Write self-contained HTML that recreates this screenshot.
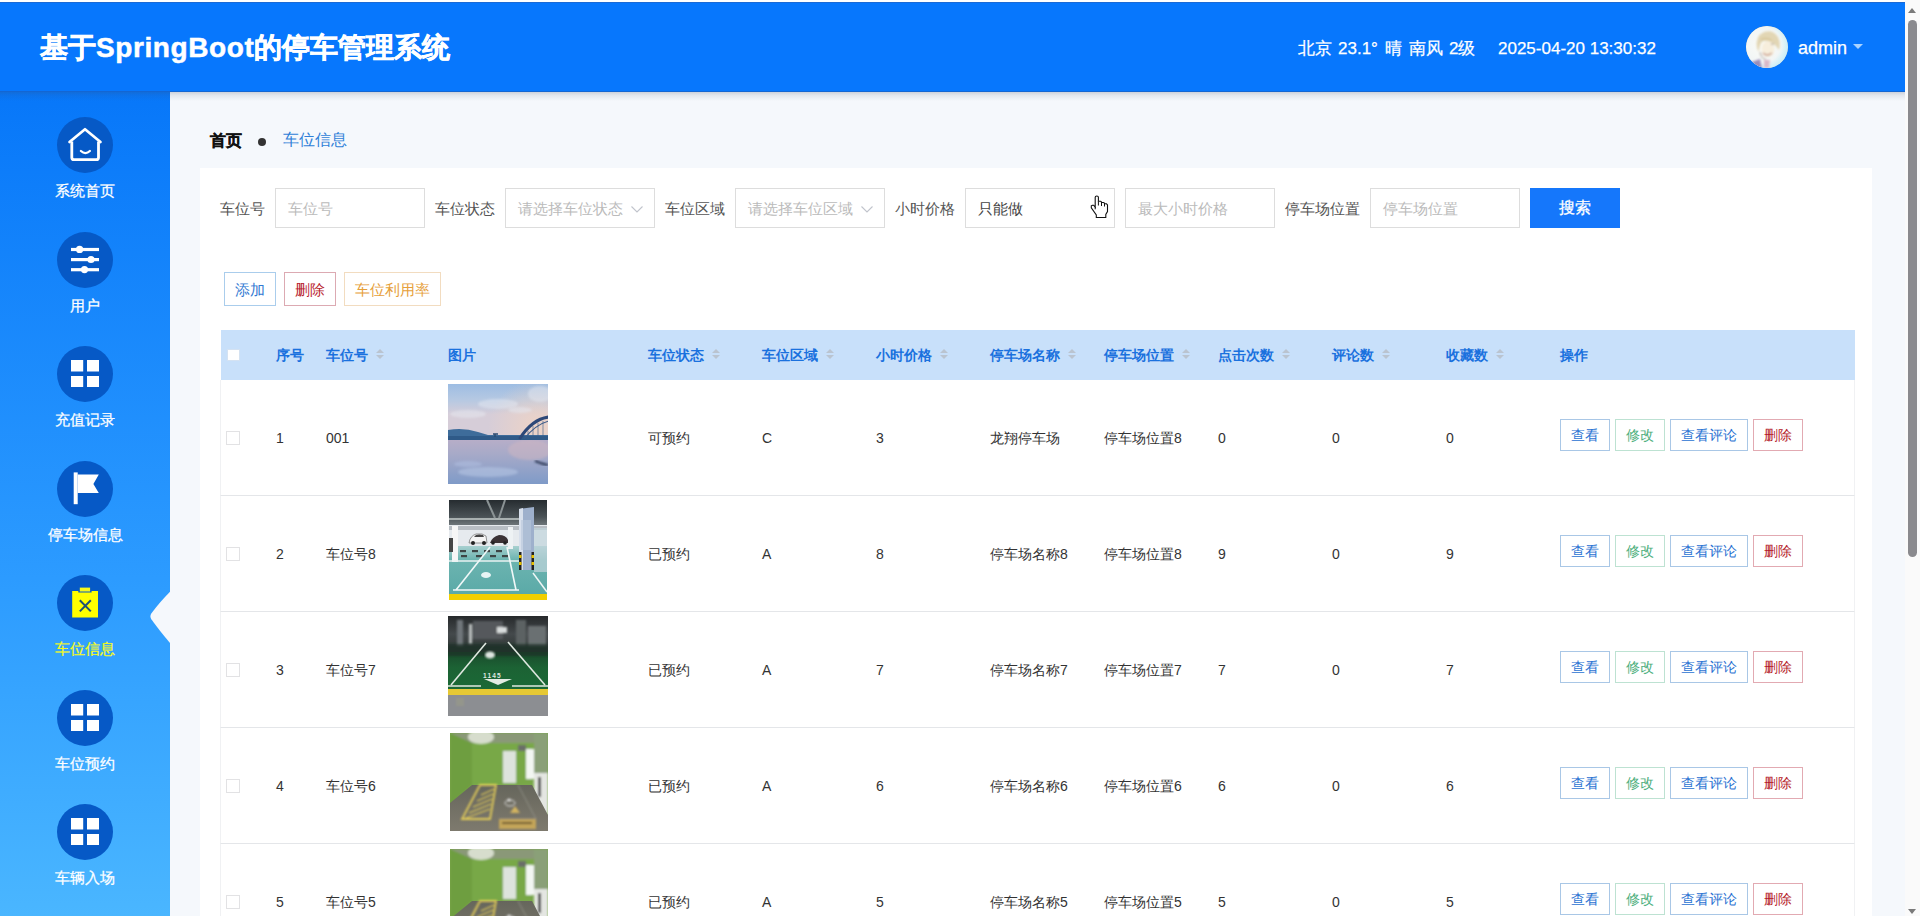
<!DOCTYPE html>
<html><head><meta charset="utf-8">
<style>
*{margin:0;padding:0;box-sizing:border-box}
html,body{width:1920px;height:916px;overflow:hidden;background:#fff;font-family:"Liberation Sans",sans-serif;}
.abs{position:absolute}
#hdr{position:absolute;left:0;top:2px;width:1905px;height:90px;background:#0777fd;border-top:1px solid #1a6ad6;border-bottom:1px solid #1466d2}
#hshadow{position:absolute;left:0;top:92px;width:1905px;height:9px;background:linear-gradient(180deg,rgba(60,70,100,0.22) 0%,rgba(60,70,100,0.10) 35%,rgba(60,70,100,0) 100%)}
#title{position:absolute;left:40px;top:26.5px;font-size:28px;font-weight:700;-webkit-text-stroke:0.5px #fff;color:#fff;white-space:nowrap;line-height:36px;}
.htxt{position:absolute;color:#fff;font-size:17px;line-height:24px;white-space:nowrap;top:33.5px;-webkit-text-stroke:0.25px #fff}
#admin{font-size:18px;top:33px}
#avatar{left:1746px;top:23px;width:42px;height:42px;border-radius:50%;background:radial-gradient(circle at 45% 40%,#f1e6c8 0%,#e6d6b8 40%,#c9c2c8 70%,#eef0f5 100%)}
#caret{left:1853px;top:41px;width:0;height:0;border-left:5px solid transparent;border-right:5px solid transparent;border-top:5px solid #a9d3ff}
#side{position:absolute;left:0;top:92px;width:170px;height:824px;background:linear-gradient(180deg,#0777f9 0%,#2c9bff 59%,#4ab6ff 100%);}
.circ{position:absolute;left:57px;width:56px;height:56px;border-radius:50%;background:#0659c6;}
.circ svg{position:absolute;left:0;top:0}
.lbl{position:absolute;left:0;width:170px;text-align:center;color:#fff;font-size:15px;line-height:20px;}
#main{position:absolute;left:170px;top:92px;width:1735px;height:824px;background:#f5f8fc;}
#card{position:absolute;left:200px;top:168px;width:1672px;height:748px;background:#fff;}
.bc{line-height:22px;white-space:nowrap}
.flbl{position:absolute;top:199px;font-size:15px;line-height:20px;color:#555;white-space:nowrap}
.inp{position:absolute;top:188px;width:150px;height:40px;border:1px solid #dddddd;background:#fff;font-size:15px;line-height:40px;padding-left:12px;color:#bbb;white-space:nowrap;overflow:hidden}
.inp.val{color:#444}
.inp .arr{position:absolute;right:11px;top:17px}
#sbtn{left:1530px;top:188px;width:90px;height:40px;background:#1577fb;color:#fff;font-size:16px;line-height:40px;text-align:center;-webkit-text-stroke:0.3px #fff}
.btn{position:absolute;top:272px;height:34px;border:1px solid;font-size:15px;line-height:33px;text-align:center;white-space:nowrap;background:#fff}
#thead{left:221px;top:330px;width:1634px;height:50px;background:#c8e0fa}
.th{position:absolute;top:345px;font-size:14px;line-height:20px;font-weight:bold;color:#1a71de;white-space:nowrap}
.sort{display:inline-block;vertical-align:middle;margin-left:8px;width:8px;height:10px;position:relative;top:-2px}
.sort:before{content:"";position:absolute;left:0;top:0;border-left:4px solid transparent;border-right:4px solid transparent;border-bottom:4px solid #bac4d0}
.sort:after{content:"";position:absolute;left:0;top:6px;border-left:4px solid transparent;border-right:4px solid transparent;border-top:4px solid #bac4d0}
.row{position:absolute;left:220px;width:1635px;height:116px;border-bottom:1px solid #e4e6e9;border-left:1px solid #f0f1f3;border-right:1px solid #f0f1f3;background:#fff}
.td{position:absolute;font-size:14px;line-height:20px;color:#333;white-space:nowrap}
.cb{position:absolute;width:14px;height:14px;border:1px solid #e2e2e4;border-radius:0;background:#fff}
.ab{position:absolute;height:32px;border:1px solid;font-size:14px;line-height:30px;text-align:center;background:#fff;white-space:nowrap}
.pic{position:absolute;width:100px;height:100px;overflow:hidden}
.p1{background:linear-gradient(180deg,#8fb0d8 0%,#b9c9e0 30%,#d8c8d0 52%,#6f8fb8 56%,#a8a8c8 70%,#7c9cc8 100%)}
.p2{background:linear-gradient(180deg,#3a4048 0%,#8a9aa0 30%,#5ea6a8 45%,#68b4b8 90%,#e8c800 92%,#f0d000 100%)}
.p3{background:linear-gradient(180deg,#303438 0%,#5a6468 30%,#2a7a48 45%,#207040 75%,#e0c020 77%,#8a8e90 80%,#7a7e80 100%)}
.p4{background:linear-gradient(180deg,#e8f0d8 0%,#6a8a40 20%,#5a7a38 55%,#6a6a60 70%,#5a5a50 100%)}
#scroll{position:absolute;left:1905px;top:0;width:15px;height:916px;background:#fafafa;}
#sarrow{position:absolute;left:3px;top:8px;width:0;height:0;border-left:4.5px solid transparent;border-right:4.5px solid transparent;border-bottom:5px solid #7a7a7a}
#sdown{position:absolute;left:3px;top:909px;width:0;height:0;border-left:4.5px solid transparent;border-right:4.5px solid transparent;border-top:5px solid #7a7a7a}
#thumb{position:absolute;left:3px;top:20px;width:9px;height:537px;border-radius:5px;background:#8a8a8e}

</style></head><body>
<div id="main"></div><div id="card"></div><div id="side"></div><div id="hshadow"></div>
<div id="hdr">
  <div id="title">基于<span style="letter-spacing:0.6px">SpringBoot</span>的停车管理系统</div>
  <div class="htxt" style="left:1298px">北京</div><div class="htxt" style="left:1338px">23.1°</div><div class="htxt" style="left:1385px">晴</div><div class="htxt" style="left:1409px">南风</div><div class="htxt" style="left:1449px">2级</div>
  <div class="htxt" id="date" style="left:1498px">2025-04-20 13:30:32</div>
  <svg class="abs" id="avatar" width="42" height="42" viewBox="0 0 42 42"><defs><clipPath id="avc"><circle cx="21" cy="21" r="21"/></clipPath><filter id="avb"><feGaussianBlur stdDeviation="0.9"/></filter><radialGradient id="avg" cx="0.4" cy="0.45" r="0.6"><stop offset="0" stop-color="#fbfbf6"/><stop offset="0.7" stop-color="#f2f6f6"/><stop offset="1" stop-color="#c8eef8"/></radialGradient></defs><g clip-path="url(#avc)"><rect width="42" height="42" fill="url(#avg)"/><g filter="url(#avb)"><path d="M11 22 Q9 10 18 6 Q27 3 32 11 Q35 17 33 24 L30 20 Q25 14 17 15 Q13 18 13 26 Z" fill="#e2d6b4"/><ellipse cx="22" cy="23" rx="6.5" ry="8" fill="#f7eedc"/><path d="M15 14 Q20 11 26 15" stroke="#d8c89c" stroke-width="2" fill="none"/><path d="M17 27 Q21 31 26 27" stroke="#c89a8a" stroke-width="1.3" fill="none"/><path d="M25 18 L28 18" stroke="#8a7a6a" stroke-width="0.8"/><path d="M6 36 L14 33 L16 42 L4 42 Z" fill="#9a8cb8"/><path d="M18 34 L24 34 L23 42 L18 42 Z" fill="#d8b8c8"/><path d="M14 26 Q16 34 20 33" stroke="#9a8a80" stroke-width="0.8" fill="none"/></g></g></svg>
  <div class="htxt" id="admin" style="left:1798px">admin</div>
  <div class="abs" id="caret"></div>
</div>
<div class="circ" style="top:117.0px"><svg width="56" height="56" viewBox="0 0 56 56"><path d="M12.5 25 L28 12.2 L43.5 25" fill="none" stroke="#fff" stroke-width="2.7" stroke-linejoin="round" stroke-linecap="round"/><path d="M14.8 24.5 V40.4 Q14.8 42.6 17 42.6 H39.3 Q41.5 42.6 41.5 40.4 V24.5" fill="none" stroke="#fff" stroke-width="2.8" stroke-linejoin="round"/><path d="M23.9 34 Q28.4 38.2 32.9 34" fill="none" stroke="#fff" stroke-width="2.3" stroke-linecap="round"/></svg></div>
<div class="lbl" style="top:181.0px;color:#fff;-webkit-text-stroke:0.25px #fff">系统首页</div>
<div class="circ" style="top:231.5px"><svg width="56" height="56" viewBox="0 0 56 56"><g stroke="#fff" stroke-width="3.2" stroke-linecap="butt"><line x1="14" y1="17.5" x2="42" y2="17.5"/><line x1="14" y1="27.6" x2="42" y2="27.6"/><line x1="14" y1="37.7" x2="42" y2="37.7"/></g><g fill="#fff"><circle cx="22.6" cy="17.4" r="3.6"/><circle cx="34" cy="27.5" r="3.6"/><circle cx="27.5" cy="37.6" r="3.6"/></g></svg></div>
<div class="lbl" style="top:295.5px;color:#fff;-webkit-text-stroke:0.25px #fff">用户</div>
<div class="circ" style="top:346.0px"><svg width="56" height="56" viewBox="0 0 56 56"><g fill="#fff"><rect x="14" y="14" width="12.2" height="11.5"/><rect x="30" y="14" width="12" height="11.5"/><rect x="14" y="30" width="12.2" height="11"/><rect x="30" y="30" width="12" height="11"/></g></svg></div>
<div class="lbl" style="top:410.0px;color:#fff;-webkit-text-stroke:0.25px #fff">充值记录</div>
<div class="circ" style="top:460.5px"><svg width="56" height="56" viewBox="0 0 56 56"><path d="M16.7 11.4 H20.7 V43.2 H16.7 Z" fill="#fff"/><path d="M20.7 13.5 H41.8 L36.4 22.9 L41.8 32.1 H20.7 Z" fill="#fff"/></svg></div>
<div class="lbl" style="top:524.5px;color:#fff;-webkit-text-stroke:0.25px #fff">停车场信息</div>
<div class="circ" style="top:575.0px"><svg width="56" height="56" viewBox="0 0 56 56"><rect x="22.8" y="12.6" width="10.3" height="3.9" fill="#f6fa1a"/><path d="M15.2 15.9 H21.3 V17.5 H34.6 V15.9 H41 V42.5 H15.2 Z" fill="#ffff00"/><path d="M22.8 25.2 L33.8 36.4 M33.8 25.2 L22.8 36.4" stroke="#1e4f73" stroke-width="2"/></svg></div>
<div class="lbl" style="top:639.0px;color:#f4fa1c;-webkit-text-stroke:0.25px #f4fa1c">车位信息</div>
<div class="circ" style="top:689.5px"><svg width="56" height="56" viewBox="0 0 56 56"><g fill="#fff"><rect x="14" y="14" width="12.2" height="11.5"/><rect x="30" y="14" width="12" height="11.5"/><rect x="14" y="30" width="12.2" height="11"/><rect x="30" y="30" width="12" height="11"/></g></svg></div>
<div class="lbl" style="top:753.5px;color:#fff;-webkit-text-stroke:0.25px #fff">车位预约</div>
<div class="circ" style="top:804.0px"><svg width="56" height="56" viewBox="0 0 56 56"><g fill="#fff"><rect x="14" y="14" width="12.2" height="11.5"/><rect x="30" y="14" width="12" height="11.5"/><rect x="14" y="30" width="12.2" height="11"/><rect x="30" y="30" width="12" height="11"/></g></svg></div>
<div class="lbl" style="top:868.0px;color:#fff;-webkit-text-stroke:0.25px #fff">车辆入场</div>
<svg class="abs" style="left:146px;top:590px" width="26" height="56" viewBox="0 0 26 56"><path d="M24 1.8 Q13 13 5.5 23.3 Q3.3 26.4 5.5 29.5 Q13 40 24 53 Z" fill="#f5f8fc"/></svg>
<div class="abs bc" style="left:210px;top:129.5px;font-weight:bold;color:#111;font-size:16px;-webkit-text-stroke:0.3px #111">首页</div>
<div class="abs" style="left:258px;top:138px;width:8px;height:8px;border-radius:50%;background:#333"></div>
<div class="abs bc" style="left:283px;top:129px;color:#2f7fd8;font-size:16px">车位信息</div>
<div class="flbl" style="left:220px">车位号</div>
<div class="inp" style="left:275px">车位号</div>
<div class="flbl" style="left:435px">车位状态</div>
<div class="inp" style="left:505px">请选择车位状态<svg class="arr" width="12" height="7" viewBox="0 0 12 7"><path d="M0.5 0.5 L6 6 L11.5 0.5" fill="none" stroke="#c0c4cc" stroke-width="1.1"/></svg></div>
<div class="flbl" style="left:665px">车位区域</div>
<div class="inp" style="left:735px">请选择车位区域<svg class="arr" width="12" height="7" viewBox="0 0 12 7"><path d="M0.5 0.5 L6 6 L11.5 0.5" fill="none" stroke="#c0c4cc" stroke-width="1.1"/></svg></div>
<div class="flbl" style="left:895px">小时价格</div>
<div class="inp val" style="left:965px">只能做</div>
<div class="inp" style="left:1125px">最大小时价格</div>
<div class="flbl" style="left:1285px">停车场位置</div>
<div class="inp" style="left:1370px">停车场位置</div>
<div class="abs" id="sbtn">搜索</div>
<svg class="abs" style="left:1080px;top:190px" width="36" height="34" viewBox="0 0 36 34"><path d="M15.2 7.2 Q15.2 6 16.8 6 Q18.4 6 18.4 7.2 V11.3 H20.5 Q21.5 11.3 21.5 12.3 V12.5 H23.5 Q24.5 12.5 24.5 13.5 V13.8 H26.5 L27.5 15 V21.6 L25.8 24.5 V27.5 H16.3 V25 L11.3 17.8 V15.8 L12.5 15.2 H13.5 L15.2 17 Z" fill="#fff" stroke="#111" stroke-width="1.1" stroke-linejoin="miter"/><path d="M15.2 17 V19.3 M18.4 11.3 V15.5 M21.5 12.5 V16 M24.5 13.8 V16.5" stroke="#111" stroke-width="1"/></svg>
<div class="btn" style="left:224px;width:52px;color:#3279d2;border-color:#aacdec">添加</div>
<div class="btn" style="left:284px;width:52px;color:#b8222c;border-color:#dcaab2">删除</div>
<div class="btn" style="left:344px;width:97px;color:#e6a03a;border-color:#f2dcc0">车位利用率</div>
<div class="abs" id="thead"></div>
<div class="cb" style="left:226.5px;top:348.5px;width:13px;height:12.5px;border-color:#d4e2f2"></div>
<div class="th" style="left:276px">序号</div>
<div class="th" style="left:326px">车位号<span class="sort"></span></div>
<div class="th" style="left:448px">图片</div>
<div class="th" style="left:648px">车位状态<span class="sort"></span></div>
<div class="th" style="left:762px">车位区域<span class="sort"></span></div>
<div class="th" style="left:876px">小时价格<span class="sort"></span></div>
<div class="th" style="left:990px">停车场名称<span class="sort"></span></div>
<div class="th" style="left:1104px">停车场位置<span class="sort"></span></div>
<div class="th" style="left:1218px">点击次数<span class="sort"></span></div>
<div class="th" style="left:1332px">评论数<span class="sort"></span></div>
<div class="th" style="left:1446px">收藏数<span class="sort"></span></div>
<div class="th" style="left:1560px">操作</div>
<div class="row" style="top:380px"></div>
<div class="cb" style="left:226px;top:431px"></div>
<div class="td" style="left:276px;top:427.5px">1</div>
<div class="td" style="left:326px;top:427.5px">001</div>
<div class="td" style="left:648px;top:427.5px">可预约</div>
<div class="td" style="left:762px;top:427.5px">C</div>
<div class="td" style="left:876px;top:427.5px">3</div>
<div class="td" style="left:990px;top:427.5px">龙翔停车场</div>
<div class="td" style="left:1104px;top:427.5px">停车场位置8</div>
<div class="td" style="left:1218px;top:427.5px">0</div>
<div class="td" style="left:1332px;top:427.5px">0</div>
<div class="td" style="left:1446px;top:427.5px">0</div>
<div class="pic" style="left:448px;top:384px"><svg width="100" height="100" viewBox="0 0 100 100">
<defs>
<linearGradient id="s1" x1="0" y1="0" x2="0" y2="1"><stop offset="0" stop-color="#9dbde3"/><stop offset="0.3" stop-color="#b7c9e2"/><stop offset="0.55" stop-color="#d6cdd8"/></linearGradient>
<linearGradient id="w1" x1="0" y1="0" x2="0" y2="1"><stop offset="0" stop-color="#b9aec8"/><stop offset="0.35" stop-color="#a7aac8"/><stop offset="1" stop-color="#7f9bc8"/></linearGradient>
<radialGradient id="g1" cx="0.9" cy="0.45" r="0.5"><stop offset="0" stop-color="#f0d4c4" stop-opacity="0.9"/><stop offset="1" stop-color="#f0d4c4" stop-opacity="0"/></radialGradient>
<filter id="b1"><feGaussianBlur stdDeviation="1.2"/></filter>
</defs>
<rect width="100" height="55" fill="url(#s1)"/>
<rect width="100" height="100" fill="url(#g1)"/>
<g filter="url(#b1)" fill="#e8ecf4" opacity="0.45"><ellipse cx="50" cy="20" rx="20" ry="5"/><ellipse cx="20" cy="30" rx="18" ry="4"/><ellipse cx="92" cy="10" rx="12" ry="8"/><ellipse cx="72" cy="26" rx="12" ry="3"/></g>
<rect y="54" width="100" height="46" fill="url(#w1)"/>
<g filter="url(#b1)"><ellipse cx="82" cy="66" rx="22" ry="10" fill="#d4b8c0" opacity="0.45"/><ellipse cx="40" cy="88" rx="30" ry="5" fill="#c0d0ea" opacity="0.45"/><ellipse cx="20" cy="80" rx="14" ry="3" fill="#b8c8e8" opacity="0.4"/></g>
<path d="M0 46 Q15 43 30 48 L40 51 H100 V56 H0 Z" fill="#3e6c9a"/>
<path d="M0 52 H100 V56 H0 Z" fill="#2f5a88"/>
<path d="M47 53 V50 M45 50 H50" stroke="#2a4a70" stroke-width="1.4"/>
<path d="M71.5 55 Q84 35 101 33" fill="none" stroke="#2d4878" stroke-width="3"/>
<path d="M76 55 Q88 40 101 37" fill="none" stroke="#3a5a88" stroke-width="1.2"/>
<g stroke="#3a5a88" stroke-width="0.6"><path d="M80 47 V55 M85 42 V55 M90 39 V55 M95 37 V55"/></g>
<path d="M87 77 Q94 80 100 81" fill="none" stroke="#2d3a58" stroke-width="2" filter="url(#b1)"/>
</svg></div>
<div class="ab" style="left:1560px;top:419px;width:50px;color:#2a72d2;border-color:#a9c7e6">查看</div>
<div class="ab" style="left:1615px;top:419px;width:50px;color:#4cae7c;border-color:#bde2d2">修改</div>
<div class="ab" style="left:1670px;top:419px;width:78px;color:#2a72d2;border-color:#a9c7e6">查看评论</div>
<div class="ab" style="left:1753px;top:419px;width:50px;color:#b42028;border-color:#e2aab2">删除</div>
<div class="row" style="top:496px"></div>
<div class="cb" style="left:226px;top:547px"></div>
<div class="td" style="left:276px;top:543.5px">2</div>
<div class="td" style="left:326px;top:543.5px">车位号8</div>
<div class="td" style="left:648px;top:543.5px">已预约</div>
<div class="td" style="left:762px;top:543.5px">A</div>
<div class="td" style="left:876px;top:543.5px">8</div>
<div class="td" style="left:990px;top:543.5px">停车场名称8</div>
<div class="td" style="left:1104px;top:543.5px">停车场位置8</div>
<div class="td" style="left:1218px;top:543.5px">9</div>
<div class="td" style="left:1332px;top:543.5px">0</div>
<div class="td" style="left:1446px;top:543.5px">9</div>
<div class="pic" style="left:449px;top:500px"><svg width="98" height="100" viewBox="0 0 98 100">
<defs>
<linearGradient id="c2" x1="0" y1="0" x2="0" y2="1"><stop offset="0" stop-color="#262c30"/><stop offset="0.6" stop-color="#4a5256"/><stop offset="1" stop-color="#7a8286"/></linearGradient>
<linearGradient id="f2" x1="0" y1="0" x2="0" y2="1"><stop offset="0" stop-color="#a8d0d0"/><stop offset="0.25" stop-color="#6cb4b0"/><stop offset="1" stop-color="#58a8a6"/></linearGradient>
<filter id="b2"><feGaussianBlur stdDeviation="0.7"/></filter>
</defs>
<rect width="98" height="28" fill="url(#c2)"/>
<g filter="url(#b2)">
<path d="M0 19 H70" stroke="#a8b0b0" stroke-width="2"/>
<path d="M38 0 L46 18 M56 0 L50 18" stroke="#8a9294" stroke-width="2"/>
<rect x="0" y="25" width="98" height="22" fill="#e6eaee"/>
<rect x="0" y="26" width="98" height="4" fill="#b8bec4"/>
</g>
<rect x="0" y="46" width="98" height="54" fill="url(#f2)"/>
<g filter="url(#b2)">
<path d="M20 43 Q21 36 27 34 Q34 33 37 36 L38 43 Z" fill="#f4f4f4" stroke="#555" stroke-width="0.6"/>
<path d="M25 37 L35 37 L34 35 Q30 34 27 35 Z" fill="#444"/>
<circle cx="24" cy="43" r="2" fill="#222"/><circle cx="35" cy="43" r="2" fill="#222"/>
<path d="M41 43 Q43 37 50 35 Q57 35 59 40 L59 43 Z" fill="#3a3236"/>
<circle cx="44" cy="43" r="1.8" fill="#222"/><circle cx="56" cy="43" r="1.8" fill="#222"/>
<rect x="3" y="26" width="6" height="36" fill="#f6f6f6"/>
<rect x="59" y="27" width="5" height="22" fill="#eef2f4"/>
<rect x="0" y="38" width="4" height="14" fill="#444"/>
<g fill="#3c4444"><rect x="11" y="50" width="6" height="2.2"/><rect x="23" y="50" width="6" height="2.2"/><rect x="35" y="50" width="6" height="2.2"/><rect x="47" y="50" width="6" height="2.2"/><rect x="12" y="55" width="6" height="2.2"/><rect x="27" y="55" width="6" height="2.2"/><rect x="41" y="55" width="6" height="2.2"/><rect x="53" y="55" width="6" height="2.2"/></g>
<path d="M0 61 H70" stroke="#e8f2f2" stroke-width="1.4"/>
<path d="M41 47 L7 90 M58 47 L67 90 M4 90 H70" stroke="#f0f8f8" stroke-width="1.6" fill="none"/>
<path d="M84 73 L98 92" stroke="#eef6f6" stroke-width="1.5"/>
<ellipse cx="37" cy="75" rx="5" ry="3" fill="#e8f4f4"/>
<rect x="85" y="28" width="13" height="44" fill="#c0d4dc" opacity="0.7"/>
</g>
<path d="M70 9 L85 7 L85 70 L70 70 Z" fill="#9eb0cc"/>
<path d="M70 9 L74 8 V70 H70 Z" fill="#d8e0ec"/>
<g filter="url(#b2)"><rect x="72" y="20" width="10" height="30" fill="#b8c6dc" opacity="0.6"/></g>
<rect x="70" y="52" width="2.5" height="18" fill="#222"/><rect x="82.5" y="52" width="2.5" height="18" fill="#222"/>
<g fill="#e8c000"><rect x="70" y="55" width="2.5" height="3"/><rect x="70" y="62" width="2.5" height="3"/><rect x="82.5" y="55" width="2.5" height="3"/><rect x="82.5" y="62" width="2.5" height="3"/></g>
<rect x="0" y="94" width="98" height="6" fill="#f2cf00"/>
</svg></div>
<div class="ab" style="left:1560px;top:535px;width:50px;color:#2a72d2;border-color:#a9c7e6">查看</div>
<div class="ab" style="left:1615px;top:535px;width:50px;color:#4cae7c;border-color:#bde2d2">修改</div>
<div class="ab" style="left:1670px;top:535px;width:78px;color:#2a72d2;border-color:#a9c7e6">查看评论</div>
<div class="ab" style="left:1753px;top:535px;width:50px;color:#b42028;border-color:#e2aab2">删除</div>
<div class="row" style="top:612px"></div>
<div class="cb" style="left:226px;top:663px"></div>
<div class="td" style="left:276px;top:659.5px">3</div>
<div class="td" style="left:326px;top:659.5px">车位号7</div>
<div class="td" style="left:648px;top:659.5px">已预约</div>
<div class="td" style="left:762px;top:659.5px">A</div>
<div class="td" style="left:876px;top:659.5px">7</div>
<div class="td" style="left:990px;top:659.5px">停车场名称7</div>
<div class="td" style="left:1104px;top:659.5px">停车场位置7</div>
<div class="td" style="left:1218px;top:659.5px">7</div>
<div class="td" style="left:1332px;top:659.5px">0</div>
<div class="td" style="left:1446px;top:659.5px">7</div>
<div class="pic" style="left:448px;top:616px"><svg width="100" height="100" viewBox="0 0 100 100">
<defs>
<linearGradient id="c3" x1="0" y1="0" x2="0" y2="1"><stop offset="0" stop-color="#26292b"/><stop offset="0.5" stop-color="#44494b"/><stop offset="1" stop-color="#2c3432"/></linearGradient>
<linearGradient id="g3" x1="0" y1="0" x2="0" y2="1"><stop offset="0" stop-color="#1a4a2c"/><stop offset="0.4" stop-color="#1c6234"/><stop offset="1" stop-color="#1a6a36"/></linearGradient>
<filter id="b3"><feGaussianBlur stdDeviation="1"/></filter>
</defs>
<rect width="100" height="36" fill="url(#c3)"/>
<g filter="url(#b3)">
<rect x="9" y="4" width="6" height="26" fill="#70767a"/>
<rect x="21" y="8" width="3" height="20" fill="#c0c4c4"/>
<rect x="25" y="5" width="30" height="18" fill="#55595b"/>
<rect x="49" y="11" width="10" height="6" fill="#d8dcdc"/>
<rect x="68" y="4" width="10" height="28" fill="#5c6264"/>
<rect x="80" y="10" width="18" height="22" fill="#6a7072"/>
<rect x="0" y="30" width="100" height="8" fill="#2a3634"/>
</g>
<rect y="36" width="100" height="39" fill="url(#g3)"/>
<path d="M0 28 H100 V40 H0 Z" fill="#1e3226" opacity="0.7" filter="url(#b3)"/>
<ellipse cx="42" cy="39" rx="5" ry="3.5" fill="#dfe6e2" filter="url(#b3)"/>
<g fill="none" stroke="#dfe8e0" stroke-width="1.6">
<path d="M38 27 L3 69"/><path d="M60 26 L97 69"/>
<path d="M0 70 H33 M64 70 H100"/>
</g>
<path d="M36 63 L64 63 L50 69 Z" fill="#e4ece4"/>
<g fill="#dfe8e0" font-size="6.5" font-family="Liberation Sans" font-weight="bold"><text x="35" y="62" letter-spacing="1.2">1145</text></g>
<rect y="73" width="100" height="6" fill="#e6c834"/>
<rect y="79" width="100" height="21" fill="#8c8e92"/>
<rect x="8" y="82" width="8" height="8" fill="#9a9c88" opacity="0.6" filter="url(#b3)"/>
</svg></div>
<div class="ab" style="left:1560px;top:651px;width:50px;color:#2a72d2;border-color:#a9c7e6">查看</div>
<div class="ab" style="left:1615px;top:651px;width:50px;color:#4cae7c;border-color:#bde2d2">修改</div>
<div class="ab" style="left:1670px;top:651px;width:78px;color:#2a72d2;border-color:#a9c7e6">查看评论</div>
<div class="ab" style="left:1753px;top:651px;width:50px;color:#b42028;border-color:#e2aab2">删除</div>
<div class="row" style="top:728px"></div>
<div class="cb" style="left:226px;top:779px"></div>
<div class="td" style="left:276px;top:775.5px">4</div>
<div class="td" style="left:326px;top:775.5px">车位号6</div>
<div class="td" style="left:648px;top:775.5px">已预约</div>
<div class="td" style="left:762px;top:775.5px">A</div>
<div class="td" style="left:876px;top:775.5px">6</div>
<div class="td" style="left:990px;top:775.5px">停车场名称6</div>
<div class="td" style="left:1104px;top:775.5px">停车场位置6</div>
<div class="td" style="left:1218px;top:775.5px">6</div>
<div class="td" style="left:1332px;top:775.5px">0</div>
<div class="td" style="left:1446px;top:775.5px">6</div>
<div class="pic" style="left:450px;top:733px"><svg width="98" height="98" viewBox="0 0 98 98">
<defs>
<linearGradient id="fl4" x1="0" y1="0" x2="0" y2="1"><stop offset="0" stop-color="#66665c"/><stop offset="1" stop-color="#7e7a6e"/></linearGradient>
<filter id="b4"><feGaussianBlur stdDeviation="0.9"/></filter>
</defs>
<rect width="98" height="98" fill="#7aa84a"/>
<g filter="url(#b4)">
<rect x="0" y="0" width="98" height="10" fill="#8a9878"/>
<path d="M0 0 L22 10 V52 L0 72 Z" fill="#6e9e40"/>
<rect x="22" y="10" width="60" height="42" fill="#78a846"/>
<ellipse cx="31" cy="4" rx="13" ry="7" fill="#f0f4ea" opacity="0.75"/>
<rect x="53" y="18" width="13" height="32" fill="#dde3dc"/>
<rect x="76" y="16" width="8" height="30" fill="#f2f6f2"/>
<rect x="84" y="0" width="14" height="45" fill="#8aa078"/>
<rect x="84" y="40" width="14" height="42" fill="#e4e6e2"/>
<rect x="88" y="44" width="3" height="20" fill="#444"/>
<rect x="68" y="12" width="8" height="6" fill="#6a6e68"/>
</g>
<path d="M0 70 L22 52 H82 L98 82 V98 H0 Z" fill="url(#fl4)"/>
<g filter="url(#b4)" opacity="0.95">
<path d="M30 52 H46 L40 86 H12 Z" fill="none" stroke="#e8d058" stroke-width="1.8"/>
<g stroke="#e8d058" stroke-width="1.3"><path d="M44 56 L31 62 M43 61 L27 68 M42 66 L23 74 M41 71 L19 80 M40 76 L16 85"/></g>
<path d="M68 52 L86 86 H49" fill="none" stroke="#9a9a90" stroke-width="0.8"/>
<ellipse cx="60" cy="70" rx="5" ry="3" fill="none" stroke="#e8e8e8" stroke-width="1"/>
<circle cx="59" cy="67" r="1.6" fill="#f0f0f0"/>
<path d="M65 73 L70 80 H60 Z" fill="#d8b860"/>
<rect x="49" y="86" width="37" height="10" fill="#c8a858"/>
<path d="M52 90 H82" stroke="#4a3a20" stroke-width="1.5"/>
</g>
</svg></div>
<div class="ab" style="left:1560px;top:767px;width:50px;color:#2a72d2;border-color:#a9c7e6">查看</div>
<div class="ab" style="left:1615px;top:767px;width:50px;color:#4cae7c;border-color:#bde2d2">修改</div>
<div class="ab" style="left:1670px;top:767px;width:78px;color:#2a72d2;border-color:#a9c7e6">查看评论</div>
<div class="ab" style="left:1753px;top:767px;width:50px;color:#b42028;border-color:#e2aab2">删除</div>
<div class="row" style="top:844px"></div>
<div class="cb" style="left:226px;top:895px"></div>
<div class="td" style="left:276px;top:891.5px">5</div>
<div class="td" style="left:326px;top:891.5px">车位号5</div>
<div class="td" style="left:648px;top:891.5px">已预约</div>
<div class="td" style="left:762px;top:891.5px">A</div>
<div class="td" style="left:876px;top:891.5px">5</div>
<div class="td" style="left:990px;top:891.5px">停车场名称5</div>
<div class="td" style="left:1104px;top:891.5px">停车场位置5</div>
<div class="td" style="left:1218px;top:891.5px">5</div>
<div class="td" style="left:1332px;top:891.5px">0</div>
<div class="td" style="left:1446px;top:891.5px">5</div>
<div class="pic" style="left:450px;top:849px"><svg width="98" height="98" viewBox="0 0 98 98">
<defs>
<linearGradient id="fl4" x1="0" y1="0" x2="0" y2="1"><stop offset="0" stop-color="#66665c"/><stop offset="1" stop-color="#7e7a6e"/></linearGradient>
<filter id="b4"><feGaussianBlur stdDeviation="0.9"/></filter>
</defs>
<rect width="98" height="98" fill="#7aa84a"/>
<g filter="url(#b4)">
<rect x="0" y="0" width="98" height="10" fill="#8a9878"/>
<path d="M0 0 L22 10 V52 L0 72 Z" fill="#6e9e40"/>
<rect x="22" y="10" width="60" height="42" fill="#78a846"/>
<ellipse cx="31" cy="4" rx="13" ry="7" fill="#f0f4ea" opacity="0.75"/>
<rect x="53" y="18" width="13" height="32" fill="#dde3dc"/>
<rect x="76" y="16" width="8" height="30" fill="#f2f6f2"/>
<rect x="84" y="0" width="14" height="45" fill="#8aa078"/>
<rect x="84" y="40" width="14" height="42" fill="#e4e6e2"/>
<rect x="88" y="44" width="3" height="20" fill="#444"/>
<rect x="68" y="12" width="8" height="6" fill="#6a6e68"/>
</g>
<path d="M0 70 L22 52 H82 L98 82 V98 H0 Z" fill="url(#fl4)"/>
<g filter="url(#b4)" opacity="0.95">
<path d="M30 52 H46 L40 86 H12 Z" fill="none" stroke="#e8d058" stroke-width="1.8"/>
<g stroke="#e8d058" stroke-width="1.3"><path d="M44 56 L31 62 M43 61 L27 68 M42 66 L23 74 M41 71 L19 80 M40 76 L16 85"/></g>
<path d="M68 52 L86 86 H49" fill="none" stroke="#9a9a90" stroke-width="0.8"/>
<ellipse cx="60" cy="70" rx="5" ry="3" fill="none" stroke="#e8e8e8" stroke-width="1"/>
<circle cx="59" cy="67" r="1.6" fill="#f0f0f0"/>
<path d="M65 73 L70 80 H60 Z" fill="#d8b860"/>
<rect x="49" y="86" width="37" height="10" fill="#c8a858"/>
<path d="M52 90 H82" stroke="#4a3a20" stroke-width="1.5"/>
</g>
</svg></div>
<div class="ab" style="left:1560px;top:883px;width:50px;color:#2a72d2;border-color:#a9c7e6">查看</div>
<div class="ab" style="left:1615px;top:883px;width:50px;color:#4cae7c;border-color:#bde2d2">修改</div>
<div class="ab" style="left:1670px;top:883px;width:78px;color:#2a72d2;border-color:#a9c7e6">查看评论</div>
<div class="ab" style="left:1753px;top:883px;width:50px;color:#b42028;border-color:#e2aab2">删除</div>
<div id="scroll"><div id="sarrow"></div><div id="thumb"></div><div id="sdown"></div></div>
</body></html>
